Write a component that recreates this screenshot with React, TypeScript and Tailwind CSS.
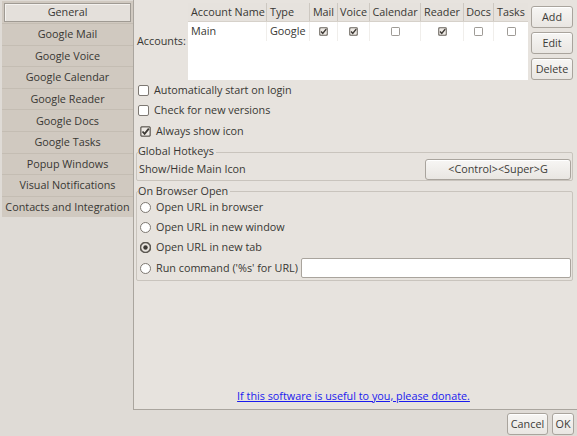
import React from "react";

const font = { fontFamily: '"Open Sans", "DejaVu Sans", sans-serif' };

function Check({ checked, small }: { checked?: boolean; small?: boolean }) {
  const s = small ? 9 : 11;
  return (
    <svg width={s} height={s} viewBox="0 0 11 11" className="shrink-0">
      <rect x="0.5" y="0.5" width="10" height="10" rx="1.5" fill={checked ? "#6e6a64" : "#ffffff"} stroke="#7d7872" />
      {checked && <rect x="1.5" y="1.5" width="8" height="8" rx="1" fill="#eeeae5" />}
      {checked && <path d="M2.5 5.5 L4.6 7.8 L8.8 2.6" fill="none" stroke="#3c3934" strokeWidth="1.8" />}
    </svg>
  );
}

function Radio({ checked }: { checked?: boolean }) {
  return (
    <svg width="11" height="11" viewBox="0 0 11 11" className="shrink-0">
      <circle cx="5.5" cy="5.5" r="5" fill={checked ? "#e8e4df" : "#ffffff"} stroke={checked ? "#5c5852" : "#7d7872"} strokeWidth={checked ? 1.6 : 1} />
      {checked && <circle cx="5.5" cy="5.5" r="2.2" fill="#3c3934" />}
    </svg>
  );
}

function Btn({ children, className = "" }: { children: React.ReactNode; className?: string }) {
  return (
    <div className={`flex items-center justify-center whitespace-nowrap rounded-[3px] border border-[#a9a49d] bg-gradient-to-b from-[#f7f6f4] to-[#e9e6e2] text-[#3c3b37] shadow-[inset_0_1px_0_#ffffff] ${className}`}>
      {children}
    </div>
  );
}

const tabs = [
  "General",
  "Google Mail",
  "Google Voice",
  "Google Calendar",
  "Google Reader",
  "Google Docs",
  "Google Tasks",
  "Popup Windows",
  "Visual Notifications",
  "Contacts and Integration",
];

const cols = [
  { name: "Account Name", w: 79, align: "left" },
  { name: "Type", w: 43, align: "left" },
  { name: "Mail", w: 28 },
  { name: "Voice", w: 32 },
  { name: "Calendar", w: 51 },
  { name: "Reader", w: 43 },
  { name: "Docs", w: 30 },
  { name: "Tasks", w: 34 },
];

export default function App() {
  return (
    <div className="w-[577px] h-[436px] bg-[#dfdbd6] flex flex-col text-[10.8px] text-[#383733] overflow-hidden whitespace-nowrap" style={font}>
      <div className="flex h-[410px]">
        {/* Tabs */}
        <div className="w-[133px] pl-[2px] pt-[1px] flex flex-col shrink-0">
          <div className="flex flex-col w-[131px] bg-[#d0c9c0]">
            {tabs.map((t, i) =>
              i === 0 ? (
                <div key={t} className="h-[19px] mx-[2px] mt-[2px] mb-[1px] flex items-center justify-center border border-[#9f9a93] bg-[#e4e0db] shadow-[inset_1px_1px_0_#f4f2ef]">
                  {t}
                </div>
              ) : (
                <div key={t} className="h-[21.6px] flex items-center justify-center border-t border-[#c4bdb3]">
                  {t}
                </div>
              )
            )}
          </div>
        </div>
        {/* Panel */}
        <div className="flex-1 bg-[#e7e3de] border-l border-b border-[#aaa59e] flex flex-col pr-[4px]">
          {/* Accounts */}
          <div className="flex mt-[3px]">
            <div className="w-[54px] pl-[3px] flex items-center">Accounts:</div>
            <div className="w-[340px] h-[77px] bg-white flex flex-col">
              <div className="flex h-[19px] bg-[#e6e2dd] border-b border-[#d6d1ca]">
                {cols.map((c, i) => (
                  <div
                    key={c.name}
                    style={{ width: c.w }}
                    className={`flex items-center ${c.align === "left" ? "pl-[3px]" : "justify-center"} ${i < cols.length - 1 ? "border-r border-[#cdc8c1]" : ""}`}
                  >
                    {c.name}
                  </div>
                ))}
              </div>
              <div className="flex h-[19px]">
                {cols.map((c, i) => {
                  const checked = i === 2 || i === 3 || i === 5;
                  return (
                    <div
                      key={c.name}
                      style={{ width: c.w }}
                      className={`flex items-center ${c.align === "left" ? "pl-[3px]" : "justify-center"} ${i < cols.length - 1 ? "border-r border-[#f0eeeb]" : ""}`}
                    >
                      {i === 0 ? "Main" : i === 1 ? "Google" : <Check small checked={checked} />}
                    </div>
                  );
                })}
              </div>
            </div>
            <div className="flex flex-col ml-[3px] pt-[3px] gap-[4px]">
              <Btn className="w-[42px] h-[22px]">Add</Btn>
              <Btn className="w-[42px] h-[22px]">Edit</Btn>
              <Btn className="w-[42px] h-[22px]">Delete</Btn>
            </div>
          </div>

          {/* Checkboxes */}
          <div className="flex items-center gap-[5px] pl-[4px] h-[20px]">
            <Check />
            <span>Automatically start on login</span>
          </div>
          <div className="flex items-center gap-[5px] pl-[4px] h-[20px]">
            <Check />
            <span>Check for new versions</span>
          </div>
          <div className="flex items-center gap-[5px] pl-[6px] mt-[1px] h-[20px]">
            <Check checked />
            <span>Always show icon</span>
          </div>

          {/* Global Hotkeys */}
          <div className="relative mt-[11px] ml-[2px] h-[29px] border border-[#c9c4bd] rounded-[2px] flex items-center pl-[2px] pr-[1px]">
            <span className="absolute -top-[10px] left-[1px] bg-[#e7e3de] pr-[2px] leading-[16px]">Global Hotkeys</span>
            <span className="flex-1 pt-[6px]">Show/Hide Main Icon</span>
            <Btn className="w-[146px] h-[21px] mt-[6px]">&lt;Control&gt;&lt;Super&gt;G</Btn>
          </div>

          {/* On Browser Open */}
          <div className="relative mt-[10px] ml-[2px] border border-[#c9c4bd] rounded-[2px] flex flex-col pl-[3px] pr-[1px] pt-[5px] pb-[1px]">
            <span className="absolute -top-[9px] left-[1px] bg-[#e7e3de] pr-[2px] leading-[16px]">On Browser Open</span>
            <div className="flex items-center gap-[5px] h-[20px]">
              <Radio />
              <span>Open URL in browser</span>
            </div>
            <div className="flex items-center gap-[5px] h-[20px]">
              <Radio />
              <span>Open URL in new window</span>
            </div>
            <div className="flex items-center gap-[5px] h-[20px]">
              <Radio checked />
              <span>Open URL in new tab</span>
            </div>
            <div className="flex items-center gap-[5px] h-[22px]">
              <Radio />
              <span className="w-[140px]">Run command ('%s' for URL)</span>
              <div className="flex-1 h-[20px] bg-white border border-[#a9a49d] rounded-[2px]" />
            </div>
          </div>

          <div className="flex-1" />
          <div className="flex justify-center pb-[5px]">
            <span className="text-[#1a1aee] underline">If this software is useful to you, please donate.</span>
          </div>
        </div>
      </div>
      <div className="flex justify-end gap-[4px] pr-[3px] pt-[3px]">
        <Btn className="w-[41px] h-[22px]">Cancel</Btn>
        <Btn className="w-[22px] h-[22px]">OK</Btn>
      </div>
    </div>
  );
}
